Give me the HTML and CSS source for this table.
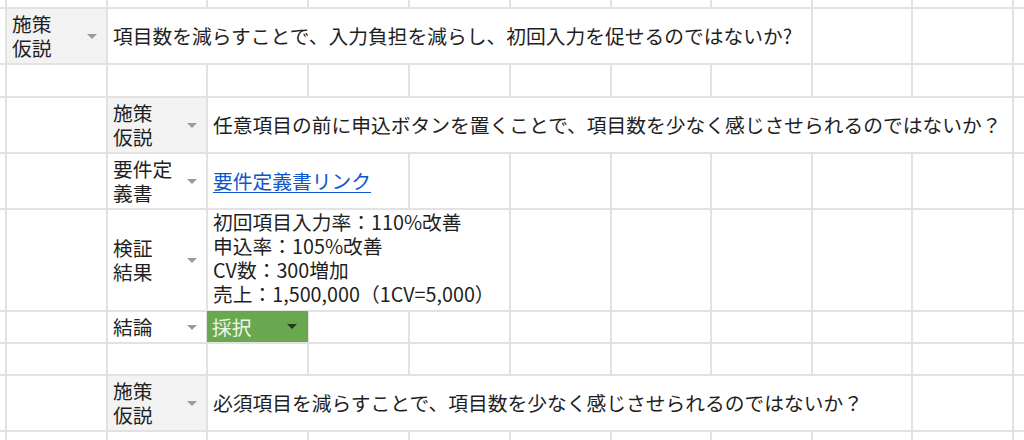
FILE: index.html
```html
<!DOCTYPE html>
<html lang="ja">
<head>
<meta charset="utf-8">
<title>施策シート</title>
<link rel="stylesheet" href="styles.css">
</head>
<body>
<div class="sheet">
  <!-- row 0 -->
  <div class="c"></div><div class="c"></div><div class="c"></div><div class="c"></div><div class="c"></div><div class="c"></div><div class="c"></div><div class="c"></div><div class="c"></div><div class="c"></div><div class="c"></div><div class="c"></div>
  <!-- row 1 -->
  <div class="c"></div>
  <div class="c lbl hl"><span>施策<br>仮説</span><span class="arrow"></span></div>
  <div class="c txt span7">項目数を減らすことで、入力負担を減らし、初回入力を促せるのではないか?</div>
  <div class="c"></div><div class="c"></div><div class="c"></div>
  <!-- row 2 -->
  <div class="c"></div><div class="c"></div><div class="c"></div><div class="c"></div><div class="c"></div><div class="c"></div><div class="c"></div><div class="c"></div><div class="c"></div><div class="c"></div><div class="c"></div><div class="c"></div>
  <!-- row 3 -->
  <div class="c"></div><div class="c"></div>
  <div class="c lbl hl"><span>施策<br>仮説</span><span class="arrow"></span></div>
  <div class="c txt span8">任意項目の前に申込ボタンを置くことで、項目数を少なく感じさせられるのではないか？</div>
  <div class="c"></div>
  <!-- row 4 -->
  <div class="c"></div><div class="c"></div>
  <div class="c lbl"><span>要件定<br>義書</span><span class="arrow"></span></div>
  <div class="c txt span2"><a class="link" href="#">要件定義書リンク</a></div>
  <div class="c"></div><div class="c"></div><div class="c"></div><div class="c"></div><div class="c"></div><div class="c"></div><div class="c"></div>
  <!-- row 5 -->
  <div class="c"></div><div class="c"></div>
  <div class="c lbl"><span>検証<br>結果</span><span class="arrow"></span></div>
  <div class="c multi span3">初回項目入力率：110%改善<br>申込率：105%改善<br>CV数：300増加<br>売上：1,500,000（1CV=5,000）</div>
  <div class="c"></div><div class="c"></div><div class="c"></div><div class="c"></div><div class="c"></div><div class="c"></div>
  <!-- row 6 -->
  <div class="c"></div><div class="c"></div>
  <div class="c lbl"><span>結論</span><span class="arrow"></span></div>
  <div class="chip"><span>採択</span><span class="arrow dark"></span></div>
  <div class="c"></div><div class="c"></div><div class="c"></div><div class="c"></div><div class="c"></div><div class="c"></div><div class="c"></div><div class="c"></div>
  <!-- row 7 -->
  <div class="c"></div><div class="c"></div><div class="c"></div><div class="c"></div><div class="c"></div><div class="c"></div><div class="c"></div><div class="c"></div><div class="c"></div><div class="c"></div><div class="c"></div><div class="c"></div>
  <!-- row 8 -->
  <div class="c"></div><div class="c"></div>
  <div class="c lbl hl"><span>施策<br>仮説</span><span class="arrow"></span></div>
  <div class="c txt span7">必須項目を減らすことで、項目数を少なく感じさせられるのではないか？</div>
  <div class="c"></div><div class="c"></div>
  <!-- row 9 -->
  <div class="c"></div><div class="c"></div><div class="c"></div><div class="c"></div><div class="c"></div><div class="c"></div><div class="c"></div><div class="c"></div><div class="c"></div><div class="c"></div><div class="c"></div><div class="c"></div>
</div>
</body>
</html>
```
FILE: styles.css
```css
html, body {
  margin: 0;
  padding: 0;
}
body {
  width: 1024px;
  height: 440px;
  overflow: hidden;
  background: #fff;
  font-family: "Noto Sans CJK JP", "Noto Sans", sans-serif;
  font-size: 19.75px;
  line-height: 24px;
  color: #1f1f1f;
}
.sheet {
  display: grid;
  grid-template-columns: 5px 99px 98px 99px 99px 99px 99px 98px 99px 98px 99px 10px;
  grid-template-rows: 7px 54px 31px 54px 54px 100px 30px 30px 54px 8px;
  gap: 2px;
  background: #e2e2e2;
  width: 1024px;
  height: 440px;
}
.c {
  background: #fff;
  min-width: 0;
}
.span2 { grid-column: span 2; }
.span3 { grid-column: span 3; }
.span7 { grid-column: span 7; }
.span8 { grid-column: span 8; }
.lbl {
  display: flex;
  align-items: center;
  justify-content: space-between;
  padding: 0 9px 0 5px;
}
.hl {
  background: #f3f3f3;
}
.arrow {
  width: 0;
  height: 0;
  border-left: 5px solid transparent;
  border-right: 5px solid transparent;
  border-top: 5px solid #9b9b9b;
  flex: none;
}
.arrow.dark {
  border-top-color: #24381a;
}
.txt {
  display: flex;
  align-items: center;
  padding: 0 5px;
  white-space: nowrap;
}
.link {
  color: #1155cc;
  text-decoration: underline;
  text-underline-offset: 3px;
}
.multi {
  padding: 0 5px;
  line-height: 24px;
  white-space: nowrap;
}
.chip {
  background: #6aa84f;
  color: #eef7ea;
  display: flex;
  align-items: center;
  justify-content: space-between;
  padding: 0 11px 0 5px;
  margin: -1px 0 0 -1px;
  width: calc(100% + 2px);
  height: calc(100% + 1px);
  box-sizing: border-box;
}
```
